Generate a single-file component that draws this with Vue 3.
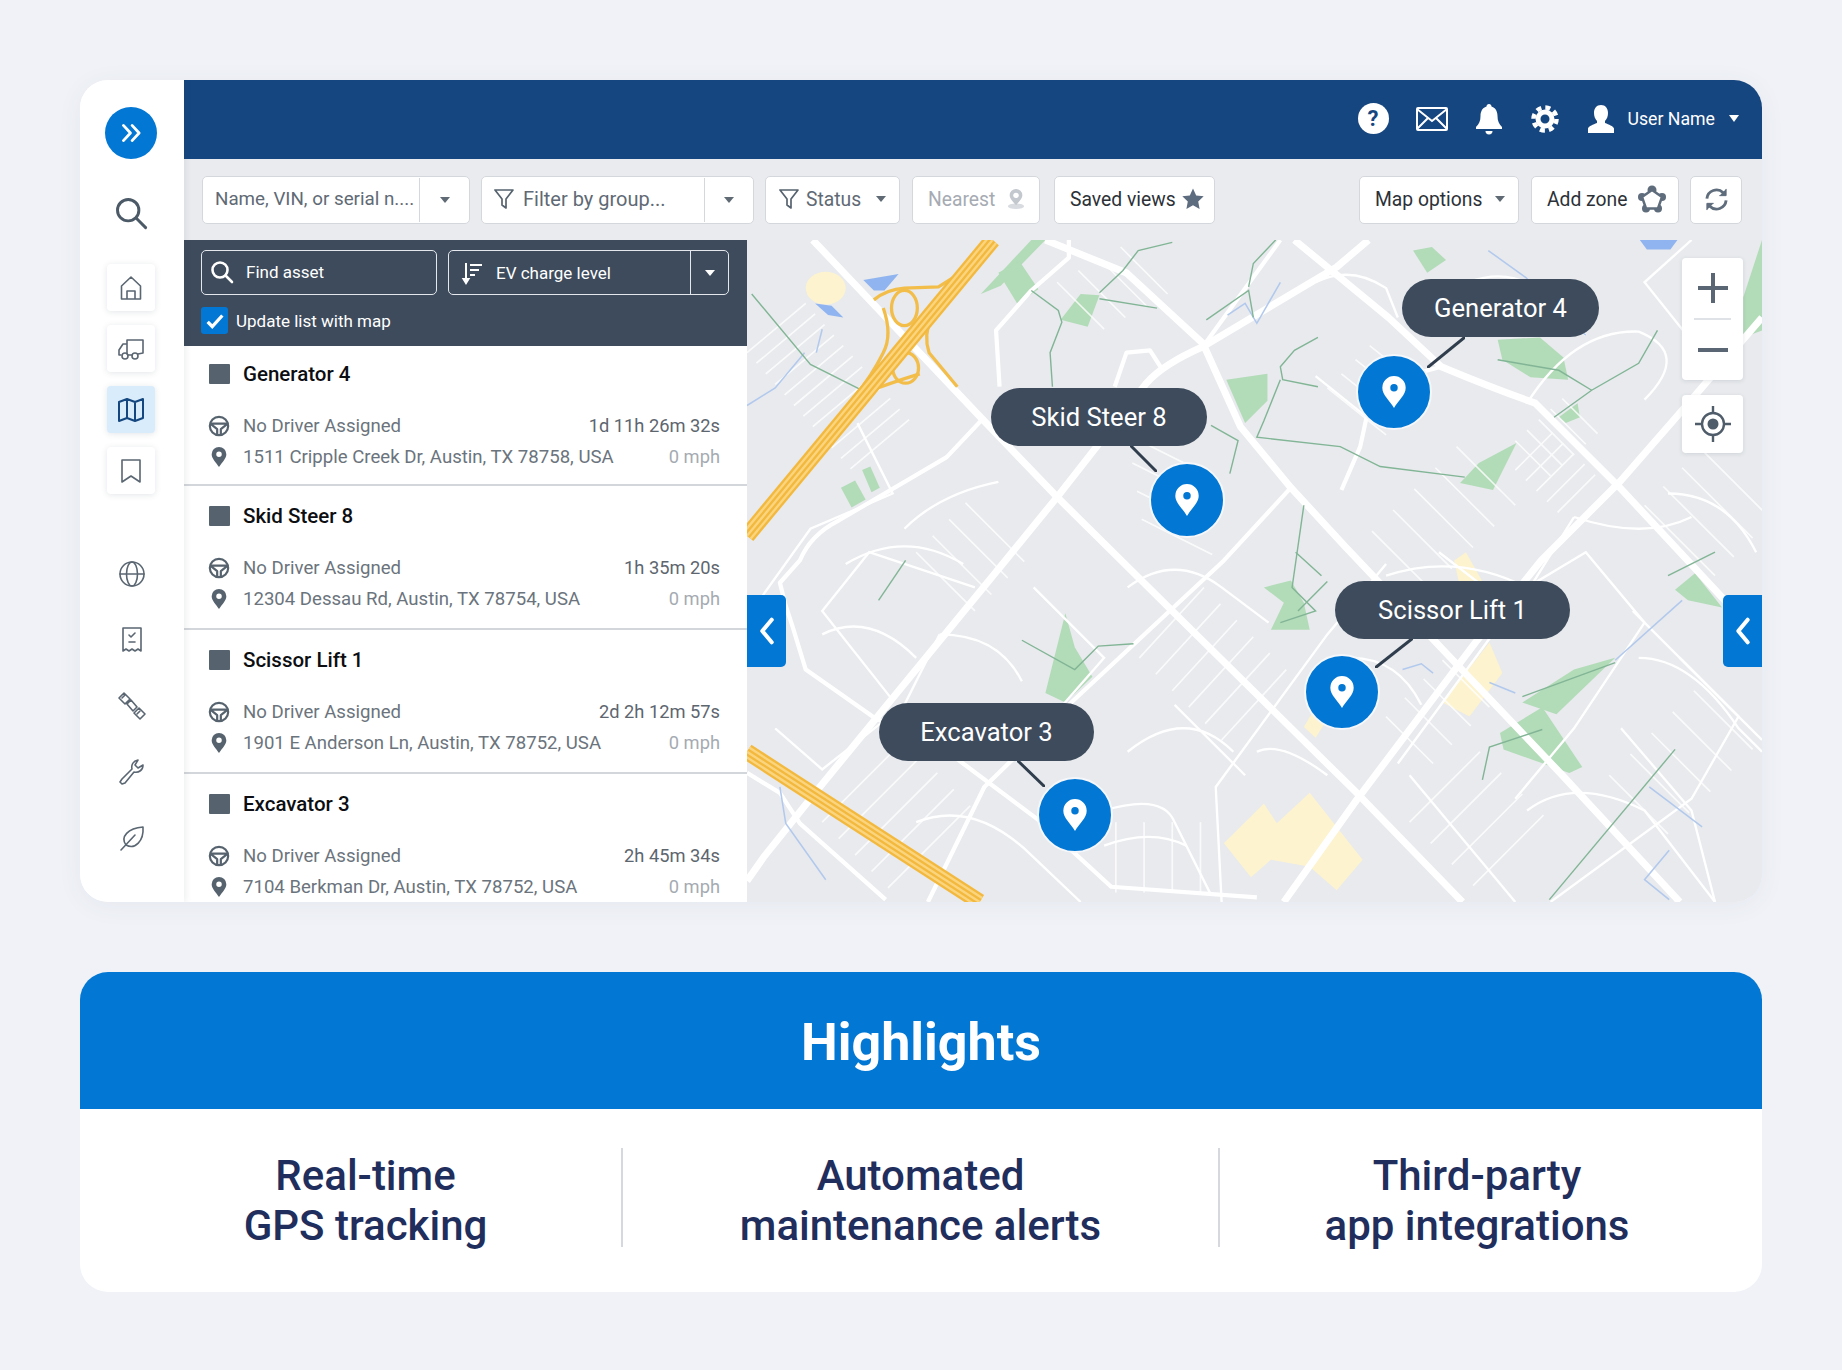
<template>
  <div class="page">
    <section class="app-card">
      <aside class="sidebar">
        <div class="logo">
          <svg viewBox="0 0 24 24" width="26" height="26" fill="none" stroke="#fff" stroke-width="2.600" stroke-linecap="round" stroke-linejoin="round">
            <path d="M5 5l6.500 7L5 19M13 5l6.500 7L13 19" />
          </svg>
        </div>
        <svg class="search-icon" viewBox="0 0 32 32" width="36" height="36" fill="none" stroke="#4c5a68" stroke-width="2.600" stroke-linecap="round">
          <circle cx="13.500" cy="13.500" r="9.500" />
          <path d="M20.500 20.500L29 29" />
        </svg>

        <div class="tiles">
          <button class="tile" type="button" aria-label="Home">
            <svg viewBox="0 0 28 28" class="nav-icon"><path d="M4.500 25V12L14 3l9.500 9v13zM10 25v-8h8v8" /></svg>
          </button>
          <button class="tile" type="button" aria-label="Assets">
            <svg viewBox="0 0 28 28" class="nav-icon">
              <path d="M10 19V5h16v13l-5 1M10 9H6l-4 6v5h2" />
              <circle cx="8" cy="21" r="3" /><circle cx="18" cy="21" r="3" />
              <path d="M11 20h4" />
            </svg>
          </button>
          <button class="tile active" type="button" aria-label="Map">
            <svg viewBox="0 0 28 28" class="nav-icon map-icon">
              <path d="M2 6l8-3 8 3 8-3v19l-8 3-8-3-8 3zM10 3v19M18 6v19" />
            </svg>
          </button>
          <button class="tile" type="button" aria-label="Saved">
            <svg viewBox="0 0 28 28" class="nav-icon"><path d="M5 3h18v22l-9-6-9 6z" /></svg>
          </button>
        </div>

        <div class="nav-lower">
          <svg viewBox="0 0 28 28" class="nav-icon">
            <circle cx="14" cy="14" r="12" />
            <ellipse cx="14" cy="14" rx="5.500" ry="12" />
            <path d="M2 14h24" />
          </svg>
          <svg viewBox="0 0 28 28" class="nav-icon">
            <path d="M5 2h18v23l-3-2-3 2-3-2-3 2-3-2-3 2zM11 9l2 2 4-4M11 16h6" />
          </svg>
          <svg viewBox="0 0 28 28" class="nav-icon">
            <path d="M1 6l5-5 6 6-5 5zM16 21l5-5 6 6-5 5zM9 12l4-4 6 7-4 4z" />
            <path d="M4 6l3-3M19 22l3-3" />
          </svg>
          <svg viewBox="0 0 28 28" class="nav-icon">
            <path d="M4 26l-2-2 2-3L14 11c-1-4 1-8 6-9l-3 5 3 3 5-3c0 5-4 8-9 7L7 25z" />
          </svg>
          <svg viewBox="0 0 28 28" class="nav-icon">
            <path d="M8 21C2 13 10 4 25 3c1 14-8 23-17 18zM3 26l14-15" />
          </svg>
        </div>
      </aside>

      <div class="main">
        <header class="topbar">
          <span class="help">?</span>
          <svg viewBox="0 0 32 24" width="32" height="24" fill="none" stroke="#fff" stroke-width="2">
            <rect x="1" y="1" width="30" height="22" rx="1" />
            <path d="M1 2l15 12L31 2M1 22l11-11M31 22L20 11" />
          </svg>
          <svg viewBox="0 0 28 32" width="28" height="32" fill="#fff">
            <path d="M14 1c1.500 0 2.500 1 2.500 2.500C21 5 22.500 9 22.500 13c0 5 1.500 8 4.500 11v2H1v-2c3-3 4.500-6 4.500-11 0-4 1.500-8 6-9.500C11.500 2 12.500 1 14 1z" />
            <path d="M10.500 28h7a3.500 3.500 0 0 1-7 0z" />
          </svg>
          <svg viewBox="0 0 30 30" width="30" height="30" fill="none" stroke="#fff">
            <circle cx="15" cy="15" r="7" stroke-width="5" />
            <circle cx="15" cy="15" r="11.500" stroke-width="4.500" stroke-dasharray="5 4.030" />
          </svg>
          <svg viewBox="0 0 28 30" width="28" height="30" fill="#fff">
            <path d="M14 1c4.500 0 7 3.500 7 8 0 3-1 6-3 8v2c4 1.500 8 3 9 5.500V29H1v-4.500C2 22 6 20.500 10 19v-2c-2-2-3-5-3-8 0-4.500 2.500-8 7-8z" />
          </svg>
          <span class="user-name">User Name</span>
          <span class="user-caret"></span>
        </header>

        <div class="toolbar">
          <div class="control name-box">
            <span class="field placeholder">Name, VIN, or serial n....</span>
            <span class="caret-cell"><i class="caret"></i></span>
          </div>
          <div class="control group-box">
            <span class="field placeholder">
              <svg viewBox="0 0 20 22" class="funnel"><path d="M1 2h18l-7 9v9l-4-3v-6z" /></svg>
              Filter by group...
            </span>
            <span class="caret-cell"><i class="caret"></i></span>
          </div>
          <div class="control status-box placeholder">
            <svg viewBox="0 0 20 22" class="funnel"><path d="M1 2h18l-7 9v9l-4-3v-6z" /></svg>
            Status
            <i class="caret"></i>
          </div>
          <div class="control nearest-box">
            Nearest
            <svg viewBox="0 0 22 24" width="20" height="22">
              <ellipse cx="11" cy="20" rx="9" ry="3" fill="#d8dbe0" />
              <path d="M11 1a7 7 0 0 1 7 7c0 4-4 7-7 11-3-4-7-7-7-11a7 7 0 0 1 7-7z" fill="#c3c8cf" />
              <circle cx="11" cy="8" r="3" fill="#fff" />
            </svg>
          </div>
          <div class="control saved-box">
            Saved views
            <svg viewBox="0 0 24 24" width="24" height="24" fill="#5e6c80">
              <path d="M12 1.500l3.200 6.900 7.500.9-5.500 5.200 1.400 7.500-6.600-3.700-6.600 3.700 1.400-7.500L1.300 9.300l7.500-.9z" />
            </svg>
          </div>
          <div class="control options-box">
            Map options
            <i class="caret"></i>
          </div>
          <div class="control zone-box">
            Add zone
            <svg viewBox="0 0 28 28" width="28" height="28" fill="#5e6c7c">
              <circle cx="14" cy="5" r="4.500" />
              <circle cx="24" cy="12" r="4" />
              <circle cx="20" cy="23.500" r="4" />
              <circle cx="8" cy="23.500" r="4" />
              <circle cx="4" cy="12" r="4" />
              <polygon points="14,5 24,12 20,23.500 8,23.500 4,12" fill="#fff" stroke="#5e6c7c" stroke-width="2.500" />
            </svg>
          </div>
          <div class="control refresh-box">
            <svg viewBox="0 0 26 26" width="25" height="25" fill="none" stroke="#5e6c7c" stroke-width="3">
              <path d="M3 12a10 10 0 0 1 17-6l2 2M23 14a10 10 0 0 1-17 6l-2-2" />
              <path d="M23 2v7h-7M3 24v-7h7" fill="#5e6c7c" stroke-width="1" />
            </svg>
          </div>
        </div>

        <div class="workspace">
          <div class="list-panel">
            <div class="list-head">
              <div class="head-row">
                <div class="find-box">
                  <svg viewBox="0 0 24 24" width="24" height="24" fill="none" stroke="#fff" stroke-width="2.600" stroke-linecap="round">
                    <circle cx="10" cy="10" r="7.500" /><path d="M15.500 15.500L22 22" />
                  </svg>
                  Find asset
                </div>
                <div class="sort-box">
                  <span class="sort-label">
                    <svg viewBox="0 0 22 24" width="22" height="24" fill="none" stroke="#fff" stroke-width="2">
                      <path d="M5 2v18M2.500 18L5 22l2.500-4z" />
                      <path d="M9 4h12M9 9h9M9 14h5" />
                    </svg>
                    EV charge level
                  </span>
                  <span class="sort-caret"><i class="caret white"></i></span>
                </div>
              </div>
              <label class="check-row">
                <span class="checkbox">
                  <svg viewBox="0 0 24 24" width="22" height="22" fill="none" stroke="#fff" stroke-width="3.600"><path d="M4 13l5 5L20 6" /></svg>
                </span>
                Update list with map
              </label>
            </div>

            <article v-for="asset in assets" :key="asset.name" class="asset-row">
              <div class="asset-name">
                <span class="asset-square"></span>
                {{ asset.name }}
              </div>
              <div class="asset-line driver-line">
                <svg viewBox="0 0 24 24" class="line-icon" fill="none" stroke="#56636f" stroke-width="2.400" stroke-linejoin="round">
                  <circle cx="12" cy="12" r="10" />
                  <path d="M2.500 9.500h19L14 15.500V22M2.500 9.500L10 15.500V22" />
                </svg>
                <span class="line-text">No Driver Assigned</span>
                <span class="line-value">{{ asset.time }}</span>
              </div>
              <div class="asset-line">
                <svg viewBox="0 0 24 24" class="line-icon" fill="#56636f">
                  <path fill-rule="evenodd" d="M12 1a8 8 0 0 1 8 8c0 5-5 9-8 14-3-5-8-9-8-14a8 8 0 0 1 8-8zm0 5a3 3 0 1 0 0 6 3 3 0 0 0 0-6z" />
                </svg>
                <span class="line-text">{{ asset.address }}</span>
                <span class="line-value muted">0 mph</span>
              </div>
            </article>
          </div>

          <div class="map">
            <svg class="map-art" viewBox="636 204 864 564" preserveAspectRatio="none">
              <rect x="636" y="204" width="864" height="564" fill="#e8eaed" />
              <g fill="#fdf3cf">
                <ellipse cx="703" cy="245" rx="17" ry="14" />
                <polygon v-for="p in sandPatches" :key="p" :points="p" />
              </g>
              <g fill="#b2dbb8">
                <polygon v-for="p in parks" :key="p" :points="p" />
              </g>
              <g fill="#8fb4ef">
                <polygon v-for="p in lakes" :key="p" :points="p" />
              </g>

              <g fill="none" stroke="#fff" stroke-width="1.400" opacity="0.8">
                <path v-for="d in hatchRoads" :key="d" :d="d" />
              </g>
              <g fill="none" stroke="#fff" stroke-width="2">
                <path v-for="d in minorRoads" :key="d" :d="d" />
              </g>
              <g fill="none" stroke="#fff" stroke-width="3.600" stroke-linejoin="round">
                <path v-for="d in mediumRoads" :key="d" :d="d" />
              </g>
              <g fill="none" stroke="#fff" stroke-width="6" stroke-linejoin="round">
                <path v-for="d in mainRoads" :key="d" :d="d" />
              </g>

              <g fill="none" stroke="#b2c9ee" stroke-width="1.300">
                <path v-for="d in streams" :key="d" :d="d" />
              </g>
              <g fill="none" stroke="#82b596" stroke-width="1.200">
                <path v-for="d in trails" :key="d" :d="d" />
              </g>

              <g fill="none" stroke="#f3bd4a" stroke-width="2.800">
                <path d="M744,255 Q755,246 770,245 L799,244 L826,227" />
                <path d="M793,270 Q786,285 791,300 L815,329" />
                <path d="M752,262 Q760,285 752,300 Q742,320 728,337" />
                <path d="M728,337 Q760,325 783,318" />
                <ellipse cx="770" cy="262" rx="11" ry="15" />
                <ellipse cx="771" cy="313" rx="11" ry="13" />
              </g>
              <g fill="none" stroke-linejoin="round">
                <path v-for="(s, i) in freewayStripes" :key="i" d="M845,204 L636,456" :stroke="s.color" :stroke-width="s.width" />
                <path v-for="(s, i) in freewayStripes" :key="'b' + i" d="M636,640 L834,768" :stroke="s.color" :stroke-width="s.width" />
              </g>
            </svg>

            <button class="edge-tab left" type="button" aria-label="Collapse list">
              <svg viewBox="0 0 20 32" width="20" height="30" fill="none" stroke="#fff" stroke-width="4.400" stroke-linecap="round" stroke-linejoin="round"><path d="M15 4L5 16l10 12" /></svg>
            </button>
            <button class="edge-tab right" type="button" aria-label="Expand panel">
              <svg viewBox="0 0 20 32" width="20" height="30" fill="none" stroke="#fff" stroke-width="4.400" stroke-linecap="round" stroke-linejoin="round"><path d="M15 4L5 16l10 12" /></svg>
            </button>

            <div v-for="m in markers" :key="m.name">
              <svg class="connector" :style="{ left: m.lx + 'px', top: m.ly + 'px', width: m.lw + 'px', height: m.lh + 'px' }" :viewBox="`0 0 ${m.lw} ${m.lh}`">
                <line :x1="m.flip ? m.lw : 0" y1="0" :x2="m.flip ? 0 : m.lw" :y2="m.lh" stroke="#2f3d4d" stroke-width="3" />
              </svg>
              <div class="map-label" :style="{ left: m.x + 'px', top: m.y + 'px', width: m.w + 'px' }">{{ m.name }}</div>
              <div class="map-pin" :style="{ left: m.px - 38 + 'px', top: m.py - 38 + 'px' }">
                <svg viewBox="0 0 24 32" width="26" height="34">
                  <path fill="#fff" fill-rule="evenodd" d="M12 1a11 11 0 0 1 11 11c0 7-7 12-11 19C8 24 1 19 1 12A11 11 0 0 1 12 1zm0 7.500a3.500 3.500 0 1 0 0 7 3.500 3.500 0 0 0 0-7z" />
                </svg>
              </div>
            </div>

            <div class="zoom-box">
              <span class="zoom-btn">
                <svg viewBox="0 0 30 30" width="30" height="30" fill="#5a6674"><path d="M13 0h4v13h13v4H17v13h-4V17H0v-4h13z" /></svg>
              </span>
              <span class="zoom-sep"></span>
              <span class="zoom-btn">
                <svg viewBox="0 0 30 6" width="30" height="6" fill="#5a6674"><rect width="30" height="4" y="1" /></svg>
              </span>
            </div>
            <div class="locate-box">
              <svg viewBox="0 0 38 38" width="38" height="38" fill="none" stroke="#4f5c6a" stroke-width="2.400">
                <circle cx="19" cy="19" r="11" />
                <circle cx="19" cy="19" r="5.500" fill="#4f5c6a" stroke="none" />
                <path d="M19 1v8M19 29v8M1 19h8M29 19h8" />
              </svg>
            </div>
          </div>
        </div>
      </div>
    </section>

    <section class="highlights">
      <h2 class="highlights-title">Highlights</h2>
      <div class="highlights-grid">
        <div class="feature first">Real-time<br />GPS tracking</div>
        <div class="feature middle">Automated<br />maintenance alerts</div>
        <div class="feature last">Third-party<br />app integrations</div>
      </div>
    </section>
  </div>
</template>

<script setup>
const assets = [
  { name: 'Generator 4', time: '1d 11h 26m 32s', address: '1511 Cripple Creek Dr, Austin, TX 78758, USA' },
  { name: 'Skid Steer 8', time: '1h 35m 20s', address: '12304 Dessau Rd, Austin, TX 78754, USA' },
  { name: 'Scissor Lift 1', time: '2d 2h 12m 57s', address: '1901 E Anderson Ln, Austin, TX 78752, USA' },
  { name: 'Excavator 3', time: '2h 45m 34s', address: '7104 Berkman Dr, Austin, TX 78752, USA' }
]

// marker positions are relative to the map's top left corner
const markers = [
  { name: 'Generator 4', x: 655, y: 39, w: 197, px: 647, py: 152, lx: 680, ly: 97, lw: 38, lh: 31, flip: true },
  { name: 'Skid Steer 8', x: 244, y: 148, w: 216, px: 440, py: 260, lx: 383, ly: 205, lw: 27, lh: 27, flip: false },
  { name: 'Scissor Lift 1', x: 588, y: 341, w: 235, px: 595, py: 452, lx: 628, ly: 398, lw: 38, lh: 30, flip: true },
  { name: 'Excavator 3', x: 132, y: 463, w: 215, px: 328, py: 575, lx: 270, ly: 520, lw: 28, lh: 27, flip: false }
]

const freewayStripes = [
  { color: '#f3b93f', width: 14 },
  { color: '#fbd57e', width: 10 },
  { color: '#f3b93f', width: 6 },
  { color: '#fbd57e', width: 2 }
]

const parks = [
  '835,250 878,204 890,204 852,243',
  '850,232 868,222 884,246 866,258',
  '903,272 920,250 936,251 926,278',
  '1044,323 1079,318 1079,341 1060,360',
  '716,415 728,409 737,425 725,432',
  '734,400 741,397 749,415 742,419',
  '1203,213 1219,210 1231,221 1215,232',
  '1275,289 1311,287 1331,304 1335,323 1303,321 1279,306',
  '1243,411 1259,394 1291,377 1271,417',
  '1327,355 1343,343 1345,355 1333,360',
  '1484,253 1500,204 1500,281 1484,287',
  '1277,624 1313,602 1347,653 1336,658 1280,638',
  '1296,598 1340,570 1375,560 1325,608',
  '890,590 907,522 915,551 930,576 907,598',
  '1076,500 1099,494 1110,513 1115,536 1082,536 1093,513',
  '1426,502 1443,488 1466,517 1437,511'
]

const sandPatches = [
  '1042,718 1076,684 1087,701 1115,675 1160,732 1138,758 1115,738 1082,732 1065,747',
  '1228,598 1268,547 1279,573 1251,610',
  '1110,619 1127,590 1138,600 1120,628',
  '1238,477 1248,470 1262,495 1245,510'
]

const lakes = [
  '735,238 765,233 753,247 744,247',
  '694,258 708,260 718,270 705,268',
  '1396,204 1428,204 1422,212 1402,212'
]

const mainRoads = [
  'M692,204 L832,352 L900,423 L1003,525 L1155,675 L1245,768',
  'M1102,204 L1182,270 L1227,312 Q1270,330 1307,343 L1379,415 L1500,545',
  'M1165,204 L1138,227 L1024,295 Q990,310 976,326 L900,423 L856,477 L698,670 L650,730 L636,750',
  'M890,204 L959,232 L1024,292 L1056,363 L1099,415 L1145,465 L1235,560 L1330,660 L1430,768',
  'M1093,768 L1155,681 L1256,547 L1312,477 L1379,410 L1440,340 L1500,270'
]

const mediumRoads = [
  'M838,355 L806,389 L714,443 Q690,455 681,477 L664,496 Q668,515 675,534 L686,570 L743,610 L816,647 L884,698 L946,755 L1070,764',
  'M1099,415 L1042,477 L912,598 L838,670 L790,768',
  'M910,204 L910,219 L878,247 L848,281 L851,329',
  'M1227,312 Q1175,325 1166,343 L1158,380 L1142,417',
  'M636,658 L664,675 L681,701 L754,766',
  'M949,329 L959,300 L979,298 L988,312',
  'M1024,295 L1090,204'
]

const minorRoads = [
  'M1210,330 L1170,360 L1120,320',
  'M1300,343 Q1340,280 1395,282 Q1440,300 1400,340',
  'M660,620 L700,655 L770,600 L800,540',
  'M760,596 L700,520 L740,470 L830,500',
  'M1040,768 L1035,670 L1130,540 L1180,480',
  'M1190,650 L1300,500 L1350,470 L1400,530 L1340,620 L1290,680',
  'M1390,520 L1480,610 L1440,680 L1320,768',
  'M1070,640 Q1090,630 1130,660',
  'M940,690 Q990,675 1000,700 L1030,760',
  'M940,720 Q980,705 1010,720',
  'M1420,420 Q1470,420 1495,470',
  'M1340,440 L1290,520 L1225,470',
  'M1200,660 L1290,768',
  'M1430,560 L1500,630',
  'M1380,620 L1440,690 L1460,768',
  'M880,500 L940,560 L870,640',
  'M1000,600 L1060,660',
  'M730,360 L760,420 L690,450 L640,520',
  'M1180,490 Q1240,470 1300,500',
  'M1340,440 Q1400,460 1440,440',
  'M1395,560 Q1440,560 1480,620 L1500,640',
  'M1300,690 Q1340,660 1400,690 L1460,768',
  'M700,540 Q740,520 780,560',
  'M720,480 Q770,450 820,480',
  'M800,540 Q850,540 870,580',
  'M960,640 Q1010,600 1050,640',
  'M960,500 Q1000,470 1040,500 L1080,530',
  'M780,700 Q830,680 880,730 L920,768',
  'M850,410 Q800,420 770,450',
  'M1150,560 Q1190,560 1210,600',
  'M1120,240 Q1150,225 1180,245 L1190,270',
  'M1250,240 Q1290,225 1320,255 L1350,285',
  'M1440,204 L1400,240 L1440,290'
]

const streams = [
  'M1267,213 L1299,236 Q1320,260 1350,285',
  'M1045,268 L1060,258 L1070,275 L1090,240',
  'M636,345 L660,330 L685,300',
  'M695,300 L700,280',
  'M1194,570 L1210,565 L1220,573',
  'M1268,581 L1290,590',
  'M1375,562 L1432,511',
  'M1404,670 L1449,704',
  'M1421,724 L1400,749 L1421,766',
  'M664,670 L669,701 L703,749'
]

const trails = [
  'M640,250 L690,310 L740,335',
  'M878,247 L901,264 L904,274 L894,300 L896,329',
  'M936,254 L985,262',
  'M936,249 L956,230 L969,213 L998,206',
  'M1063,244 L1067,224 L1086,204',
  'M1027,272 L1063,247 L1067,270',
  'M1122,287 L1102,298 L1090,312 L1092,323 L1122,329',
  'M1090,323 L1076,358 L1070,372 L1141,380 L1175,397 L1247,406',
  'M1031,362 L1054,375 L1047,403',
  'M1411,281 L1395,309 L1355,332 L1323,355',
  'M1275,306 L1327,315 L1355,332',
  'M748,511 L771,477',
  'M870,545 L915,570 L935,550 L965,548',
  'M1319,766 L1426,638',
  'M1262,664 L1268,636 L1313,621',
  'M1296,593 L1375,564',
  'M1110,430 L1100,500 L1120,520 L1090,530',
  'M1103,470 L1125,490 M1105,520 L1130,495',
  'M1420,490 L1460,470'
]

// rows of parallel side streets in the neighbourhoods
const hatch = (x, y, dx, dy, stepX, stepY, count) => {
  const lines = []
  for (let i = 0; i < count; i++) {
    const sx = x + stepX * i
    const sy = y + stepY * i
    lines.push(`M${sx},${sy} L${sx + dx},${sy + dy}`)
  }
  return lines
}

const hatchRoads = [
  ...hatch(636, 300, 50, -42, 8, 9, 12),
  ...hatch(1290, 375, 30, 30, 10, -9, 5),
  ...hatch(1290, 400, 32, -32, 9, 9, 5),
  ...hatch(970, 560, 55, -60, 14, 14, 6),
  ...hatch(700, 700, 70, -70, 14, 14, 5),
  ...hatch(1150, 470, 50, 50, 18, -18, 6),
  ...hatch(1200, 700, 60, -60, 18, 18, 4),
  ...hatch(1370, 660, 50, 50, 18, -18, 5),
  ...hatch(900, 240, 40, 40, 18, -10, 4),
  ...hatch(960, 370, 60, 30, 4, 24, 4),
  ...hatch(1130, 330, 50, 40, 12, -12, 4),
  ...hatch(950, 700, 0, 60, 24, 0, 4),
  ...hatch(1400, 430, 60, 60, 16, -16, 4),
  ...hatch(780, 470, 50, 50, 14, -14, 4),
  ...hatch(1180, 610, 40, 40, 16, -16, 4)
]
</script>

<style>
body {
  margin: 0;
  background: #f0f2f7;
}
</style>

<style scoped>
.page {
  box-sizing: border-box;
  width: 1842px;
  height: 1370px;
  padding: 80px;
  background: #f0f2f7;
  font-family: Roboto, "Liberation Sans", sans-serif;
}

.app-card {
  display: flex;
  height: 822px;
  border-radius: 28px;
  overflow: hidden;
  background: #fff;
  box-shadow: 0 4px 26px rgba(60, 80, 120, 0.06);
}

.sidebar {
  box-sizing: border-box;
  width: 104px;
  flex: none;
  display: flex;
  flex-direction: column;
  align-items: center;
  padding: 27px 3px 0 0;
  background: #fff;
  box-shadow: 2px 0 6px rgba(40, 50, 70, 0.08);
  z-index: 1;
}

.logo {
  width: 52px;
  height: 52px;
  border-radius: 50%;
  background: #0277d4;
  display: flex;
  align-items: center;
  justify-content: center;
}

.search-icon {
  margin-top: 36px;
}

.tiles {
  margin-top: 33px;
  display: flex;
  flex-direction: column;
  gap: 14px;
}

.tile {
  width: 48px;
  height: 47px;
  padding: 0;
  border: none;
  border-radius: 4px;
  background: #fff;
  box-shadow: 0 1px 6px rgba(60, 70, 90, 0.14);
  display: flex;
  align-items: center;
  justify-content: center;
}

.tile.active {
  background: #d9ecfb;
}

.nav-icon {
  width: 28px;
  height: 28px;
  fill: none;
  stroke: #5a6672;
  stroke-width: 1.6;
  stroke-linejoin: round;
  stroke-linecap: round;
}

.map-icon {
  stroke: #14477f;
  stroke-width: 2;
}

.nav-lower {
  margin-top: 66px;
  margin-left: 3px;
  display: flex;
  flex-direction: column;
  gap: 38px;
}

.main {
  flex: 1;
  min-width: 0;
  display: flex;
  flex-direction: column;
}

.topbar {
  height: 79px;
  flex: none;
  box-sizing: border-box;
  padding: 0 23px 2px 0;
  background: #16467f;
  display: flex;
  align-items: center;
  justify-content: flex-end;
  gap: 27px;
}

.help {
  width: 31px;
  height: 31px;
  border-radius: 50%;
  background: #fff;
  color: #16467f;
  font-size: 22px;
  font-weight: 700;
  line-height: 31px;
  text-align: center;
}

.user-name {
  margin-left: -14px;
  color: #fff;
  font-size: 17.7px;
}

.user-caret {
  margin-left: -13px;
  width: 0;
  height: 0;
  border-left: 5px solid transparent;
  border-right: 5px solid transparent;
  border-top: 7px solid #fff;
}

.toolbar {
  height: 81px;
  flex: none;
  box-sizing: border-box;
  padding: 17px 20px 16px 18px;
  background: #e9ebef;
  display: flex;
  gap: 11px;
}

.control {
  box-sizing: border-box;
  height: 48px;
  padding-bottom: 2px;
  background: #fff;
  border: 1px solid #d4d7dc;
  border-radius: 5px;
  display: flex;
  align-items: center;
  font-size: 19.3px;
  color: #2c3138;
  white-space: nowrap;
}

.placeholder {
  color: #5f6a75;
}

.field {
  flex: 1;
  display: flex;
  align-items: center;
  gap: 9px;
  padding-left: 12px;
}

.name-box .field {
  font-size: 18.8px;
}

.group-box .field {
  font-size: 20px;
}

.caret-cell {
  height: 100%;
  margin-bottom: -2px;
  display: flex;
  align-items: center;
  justify-content: center;
  border-left: 1px solid #d4d7dc;
}

.caret {
  display: block;
  width: 0;
  height: 0;
  border-left: 5px solid transparent;
  border-right: 5px solid transparent;
  border-top: 6px solid #5f6a75;
}

.caret.white {
  border-top-color: #fff;
}

.funnel {
  width: 20px;
  height: 22px;
  fill: none;
  stroke: #56636f;
  stroke-width: 1.7;
  stroke-linejoin: round;
}

.name-box {
  width: 268px;
}

.name-box .caret-cell {
  width: 49px;
}

.group-box {
  width: 273px;
}

.group-box .caret-cell {
  width: 48px;
}

.status-box {
  width: 135px;
  padding-left: 13px;
  gap: 7px;
}

.status-box .caret {
  margin-left: 8px;
}

.nearest-box {
  width: 128px;
  margin-left: 1px;
  padding-left: 15px;
  gap: 11px;
  color: #a6abb3;
}

.saved-box {
  width: 161px;
  margin-left: 3px;
  padding-left: 15px;
  gap: 5px;
}

.options-box {
  width: 160px;
  margin-left: auto;
  padding-left: 15px;
  gap: 13px;
}

.zone-box {
  width: 148px;
  margin-left: 1px;
  padding-left: 15px;
  gap: 11px;
}

.refresh-box {
  width: 52px;
  justify-content: center;
}

.workspace {
  flex: 1;
  min-height: 0;
  display: flex;
}

.list-panel {
  width: 563px;
  flex: none;
  overflow: hidden;
  background: #fff;
}

.list-head {
  box-sizing: border-box;
  height: 106px;
  padding: 10px 18px 0 17px;
  background: #3d4b5c;
  color: #fff;
  font-size: 17px;
}

.head-row {
  display: flex;
  gap: 11px;
}

.find-box,
.sort-box {
  box-sizing: border-box;
  height: 45px;
  padding-bottom: 1px;
  border: 1.5px solid #e4e8ec;
  border-radius: 5px;
  display: flex;
  align-items: center;
}

.find-box {
  width: 236px;
  padding-left: 8px;
  gap: 12px;
}

.sort-box {
  width: 281px;
  padding-bottom: 0;
}

.sort-label {
  flex: 1;
  display: flex;
  align-items: center;
  gap: 13px;
  padding-left: 12px;
}

.sort-caret {
  width: 37px;
  height: 100%;
  border-left: 1.5px solid #e4e8ec;
  display: flex;
  align-items: center;
  justify-content: center;
}

.check-row {
  margin-top: 12px;
  display: flex;
  align-items: center;
  gap: 8px;
  font-size: 17px;
}

.checkbox {
  width: 27px;
  height: 27px;
  border-radius: 3px;
  background: #0277d4;
  display: flex;
  align-items: center;
  justify-content: center;
}

.asset-row {
  box-sizing: border-box;
  height: 144px;
  padding: 18px 27px 0 25px;
  border-bottom: 2px solid #d3d6da;
}

.asset-row:first-of-type {
  height: 140px;
  padding-top: 16px;
}

.asset-name {
  display: flex;
  align-items: center;
  gap: 13px;
  height: 24px;
  font-size: 20.5px;
  font-weight: 500;
  color: #0c0e12;
}

.asset-square {
  width: 21px;
  height: 20px;
  background: #56636f;
  border-radius: 1px;
}

.asset-line {
  display: flex;
  align-items: center;
  height: 31px;
  font-size: 18.6px;
  color: #6b747d;
}

.driver-line {
  margin-top: 24px;
}

.line-icon {
  width: 22px;
  height: 22px;
  flex: none;
  margin-right: 13px;
  margin-left: -1px;
}

.line-text {
  flex: 1;
}

.line-value {
  font-size: 18.3px;
  color: #5d666f;
}

.line-value.muted {
  color: #a5abb2;
}

.map {
  position: relative;
  flex: 1;
  min-width: 0;
  overflow: hidden;
  background: #e8eaed;
}

.map-art {
  display: block;
  width: 100%;
  height: 100%;
  filter: blur(0.5px);
}

.edge-tab {
  position: absolute;
  top: 355px;
  width: 39px;
  height: 72px;
  padding: 0;
  border: none;
  background: #0277d4;
  display: flex;
  align-items: center;
  justify-content: center;
}

.edge-tab.left {
  left: 0;
  border-radius: 0 5px 5px 0;
}

.edge-tab.right {
  right: 0;
  border-radius: 5px 0 0 5px;
}

.connector {
  position: absolute;
}

.map-label {
  position: absolute;
  height: 58px;
  border-radius: 29px;
  background: #3d4b5c;
  color: #fff;
  font-size: 25.6px;
  line-height: 58px;
  text-align: center;
}

.map-pin {
  position: absolute;
  box-sizing: border-box;
  width: 76px;
  height: 76px;
  border-radius: 50%;
  border: 2px solid #f5f7fa;
  background: #0277d4;
  display: flex;
  align-items: center;
  justify-content: center;
}

.zoom-box,
.locate-box {
  position: absolute;
  right: 19px;
  width: 61px;
  background: #fff;
  border-radius: 4px;
  box-shadow: 0 1px 4px rgba(60, 70, 90, 0.14);
  display: flex;
  flex-direction: column;
  align-items: center;
  justify-content: center;
}

.zoom-box {
  top: 18px;
  height: 122px;
}

.zoom-btn {
  height: 60px;
  display: flex;
  align-items: center;
}

.zoom-sep {
  width: 37px;
  height: 2px;
  background: #dfe2e6;
}

.locate-box {
  top: 155px;
  height: 58px;
}

.highlights {
  margin-top: 70px;
  height: 320px;
  border-radius: 28px;
  overflow: hidden;
  background: #fff;
}

.highlights-title {
  margin: 0;
  height: 137px;
  background: #0277d4;
  color: #fff;
  font-size: 52px;
  font-weight: 700;
  line-height: 141px;
  text-align: center;
}

.highlights-grid {
  display: grid;
  grid-template-columns: 541px 599px 542px;
  padding-top: 39px;
}

.feature {
  height: 99px;
  box-sizing: border-box;
  padding-top: 3px;
  color: #1f2e5c;
  font-size: 42px;
  font-weight: 500;
  line-height: 50px;
  text-align: center;
}

.first {
  padding-left: 30px;
}

.middle {
  border-left: 2px solid #d5d8df;
  border-right: 2px solid #d5d8df;
}

.last {
  padding-right: 28px;
}
</style>
